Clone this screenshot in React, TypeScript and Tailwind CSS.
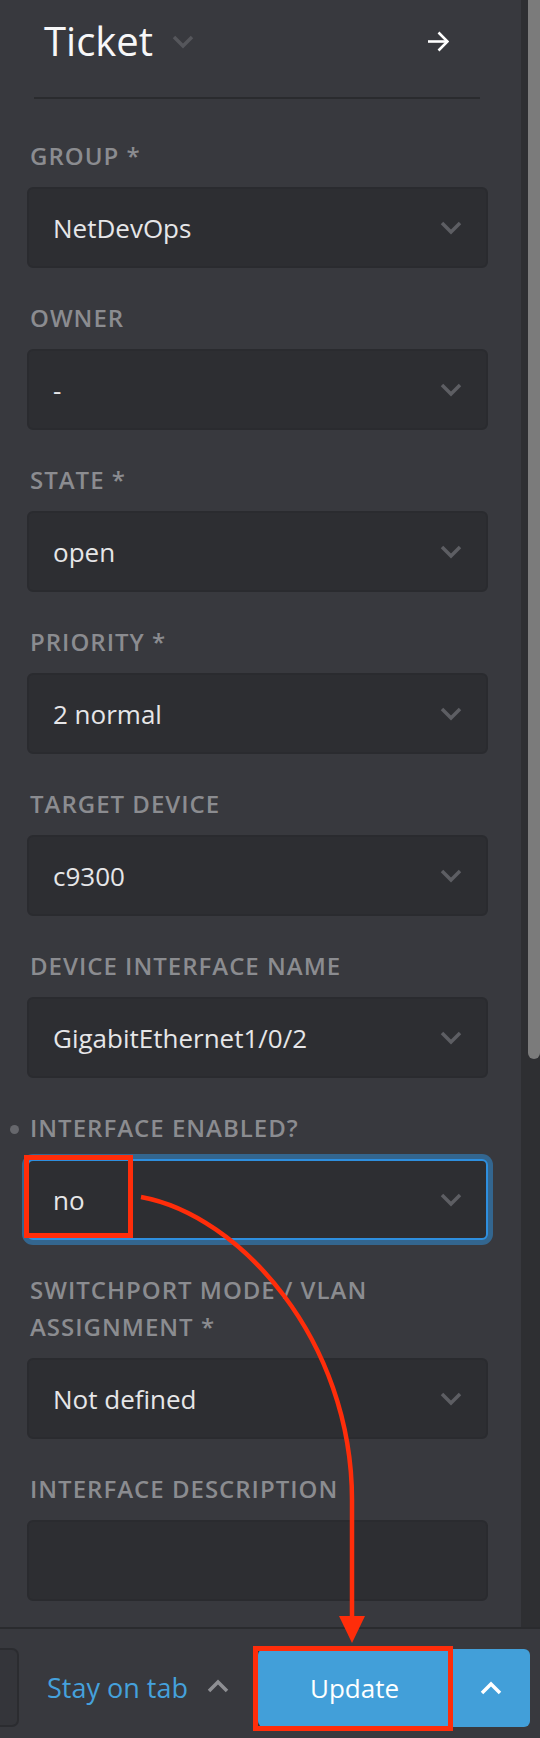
import React from "react";

type Field = {
  label: React.ReactNode;
  value: string;
  focused?: boolean;
  marker?: boolean;
};

const fields: Field[] = [
  { label: "GROUP *", value: "NetDevOps" },
  { label: "OWNER", value: "-" },
  { label: "STATE *", value: "open" },
  { label: "PRIORITY *", value: "2 normal" },
  { label: "TARGET DEVICE", value: "c9300" },
  { label: "DEVICE INTERFACE NAME", value: "GigabitEthernet1/0/2" },
  { label: "INTERFACE ENABLED?", value: "no", focused: true, marker: true },
  {
    label: (
      <>
        SWITCHPORT MODE / VLAN
        <br />
        ASSIGNMENT *
      </>
    ),
    value: "Not defined",
  },
];

function ChevronDown({ color }: { color: string }) {
  return (
    <svg width="22" height="14" viewBox="0 0 22 14" fill="none">
      <polyline
        points="2,2 11,11 20,2"
        stroke={color}
        strokeWidth="3.5"
        strokeLinecap="butt"
        strokeLinejoin="miter"
      />
    </svg>
  );
}

function ChevronUp({ color }: { color: string }) {
  return (
    <svg width="22" height="14" viewBox="0 0 22 14" fill="none">
      <polyline
        points="2,12 11,3 20,12"
        stroke={color}
        strokeWidth="3.5"
        strokeLinecap="butt"
        strokeLinejoin="miter"
      />
    </svg>
  );
}

function SelectField({ f }: { f: Field }) {
  return (
    <div className="flex flex-col">
      <div className="relative pl-[3px] text-[24px] leading-[37px] tracking-[1px] text-[#8b8c90] font-semibold">
        {f.marker && (
          <span className="absolute left-[-17px] top-[16px] w-[9px] h-[9px] rounded-full bg-[#66676c]" />
        )}
        {f.label}
      </div>
      <div
        className={
          f.focused
            ? "mt-[13px] h-[81px] rounded-[6px] bg-[#2d2e32] border-2 border-[#2e8fdf] shadow-[0_0_0_5px_#33668f] flex items-center justify-between pl-[24px] pr-[24px]"
            : "mt-[13px] h-[81px] rounded-[6px] bg-[#2d2e32] border-2 border-[#2a2b2f] flex items-center justify-between pl-[24px] pr-[24px]"
        }
      >
        <span className="text-[26px] leading-[36px] text-[#e6e6e8]">{f.value}</span>
        <ChevronDown color="#5d5e63" />
      </div>
    </div>
  );
}

export default function App() {
  return (
    <div className="relative w-[540px] h-[1738px] overflow-hidden bg-[#38393e] flex flex-col font-['Open_Sans',sans-serif]">
      <div className="flex h-[1627px]">
        <div className="w-[521px] flex flex-col">
          {/* header */}
          <div className="flex items-center justify-between pt-[13px] pl-[44px] pr-[72px]">
            <div className="flex items-center">
              <span className="text-[40px] leading-[56px] font-medium text-[#f7f7f8]">Ticket</span>
              <span className="ml-[19px] mt-[2px]">
                <ChevronDown color="#55565b" />
              </span>
            </div>
            <svg width="22" height="21" viewBox="0 0 22 21" fill="none">
              <line x1="1" y1="10.5" x2="20" y2="10.5" stroke="#ffffff" strokeWidth="2.6" />
              <polyline points="11.5,1.5 20.5,10.5 11.5,19.5" stroke="#ffffff" strokeWidth="2.6" fill="none" />
            </svg>
          </div>
          <div className="mt-[28px] ml-[34px] mr-[41px] h-[2px] bg-[#2a2b2e]" />

          {/* form */}
          <div className="pt-[38px] pl-[27px] pr-[33px] flex flex-col gap-[31px]">
            {fields.map((f, i) => (
              <SelectField key={i} f={f} />
            ))}
            <div className="flex flex-col">
              <div className="pl-[3px] text-[24px] leading-[37px] tracking-[1px] text-[#8b8c90] font-semibold">
                INTERFACE DESCRIPTION
              </div>
              <div className="mt-[13px] h-[81px] rounded-[6px] bg-[#2d2e32] border-2 border-[#2a2b2f]" />
            </div>
          </div>
        </div>
        {/* scrollbar */}
        <div className="w-[19px] bg-[#2e2f32]">
          <div className="ml-[7px] h-[1059px] bg-[#7b7b7b] rounded-b-[6px]" />
        </div>
      </div>

      {/* footer */}
      <div className="h-[111px] border-t-2 border-[#2a2b2e] bg-[#38393e] flex items-start pt-[19px] pr-[10px]">
        <div className="w-[19px] h-[79px] bg-[#34353a] border-2 border-l-0 border-[#2b2c30] rounded-r-[7px]" />
        <div className="h-[79px] flex items-center ml-[28px]">
          <span className="text-[27px] leading-[36px] text-[#45a1dc]">Stay on tab</span>
          <span className="ml-[19px] mt-[-4px]">
            <ChevronUp color="#8e8f93" />
          </span>
        </div>
        <div className="ml-auto flex h-[78px] mt-[1px]">
          <div className="w-[193px] h-full bg-[#429fd9] rounded-l-[6px] flex items-center justify-center">
            <span className="text-[26px] leading-[36px] font-medium text-white">Update</span>
          </div>
          <div className="w-[1px] h-full bg-[#3a8cc0]" />
          <div className="w-[78px] h-full bg-[#429fd9] rounded-r-[6px] flex items-center justify-center">
            <ChevronUp color="#ffffff" />
          </div>
        </div>
      </div>

      {/* annotation overlay */}
      <svg
        className="absolute left-0 top-0 pointer-events-none"
        width="540"
        height="1738"
        viewBox="0 0 540 1738"
        fill="none"
      >
        <rect x="26.5" y="1157.5" width="104" height="78" stroke="#ff2d0a" strokeWidth="5" />
        <rect x="255.5" y="1648.5" width="195" height="80" stroke="#ff2d0a" strokeWidth="5" />
        <path
          d="M141 1197 C 240 1215, 352 1340, 352 1500 L 352 1620"
          stroke="#ff2d0a"
          strokeWidth="4.5"
          fill="none"
        />
        <polygon points="339,1616 365,1616 352,1643" fill="#ff2d0a" />
      </svg>
    </div>
  );
}
